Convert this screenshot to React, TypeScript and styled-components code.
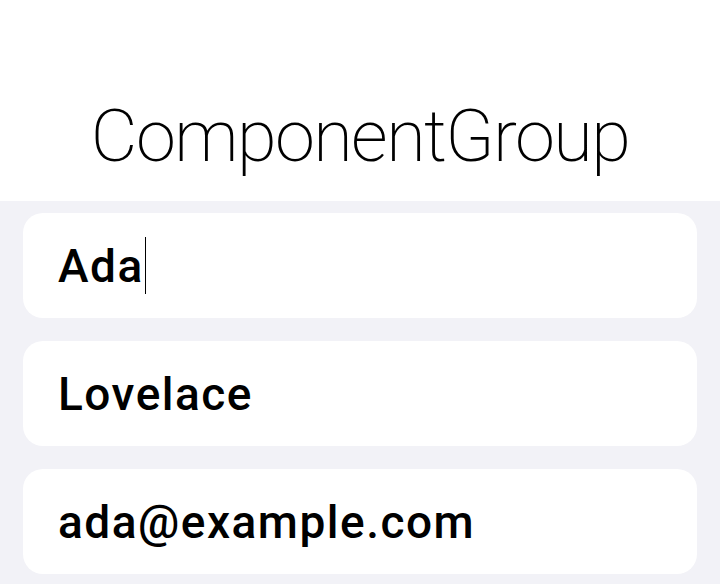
import React from "react";
import styled, { createGlobalStyle } from "styled-components";

const Global = createGlobalStyle`
  html, body { margin: 0; padding: 0; background: #ffffff; }
  body { width: 720px; height: 584px; overflow: hidden; font-family: Roboto, "Liberation Sans", sans-serif; }
`;

const Page = styled.div`
  display: flex;
  flex-direction: column;
  width: 720px;
  height: 584px;
  overflow: hidden;
`;

const Header = styled.header`
  flex: 0 0 201px;
  display: flex;
  align-items: flex-end;
  justify-content: center;
  background: #ffffff;
  box-sizing: border-box;
  padding-bottom: 28px;
`;

const Title = styled.h1`
  margin: 0;
  font-family: Roboto, "Liberation Sans", sans-serif;
  font-weight: 200;
  font-size: 72px;
  line-height: 1;
  color: #000;
  letter-spacing: -1.6px;
`;

const Group = styled.main`
  flex: 1 0 auto;
  background: #f2f2f7;
  display: flex;
  flex-direction: column;
  gap: 23px;
  padding: 12px 23px 0;
`;

const Field = styled.div`
  flex: 0 0 105px;
  background: #ffffff;
  border-radius: 20px;
  display: flex;
  align-items: center;
  padding: 0 35px;
`;

const Value = styled.span`
  font-family: Roboto, "Liberation Sans", sans-serif;
  font-weight: 500;
  font-size: 46px;
  color: #000;
  line-height: 1;
  letter-spacing: 1.5px;
`;

const Caret = styled.span`
  display: inline-block;
  width: 1px;
  height: 57px;
  background: #000;
  margin-left: 1px;
`;

export default function App() {
  return (
    <Page>
      <Global />
      <Header>
        <Title>ComponentGroup</Title>
      </Header>
      <Group>
        <Field>
          <Value>Ada</Value>
          <Caret />
        </Field>
        <Field>
          <Value>Lovelace</Value>
        </Field>
        <Field>
          <Value>ada@example.com</Value>
        </Field>
      </Group>
    </Page>
  );
}
